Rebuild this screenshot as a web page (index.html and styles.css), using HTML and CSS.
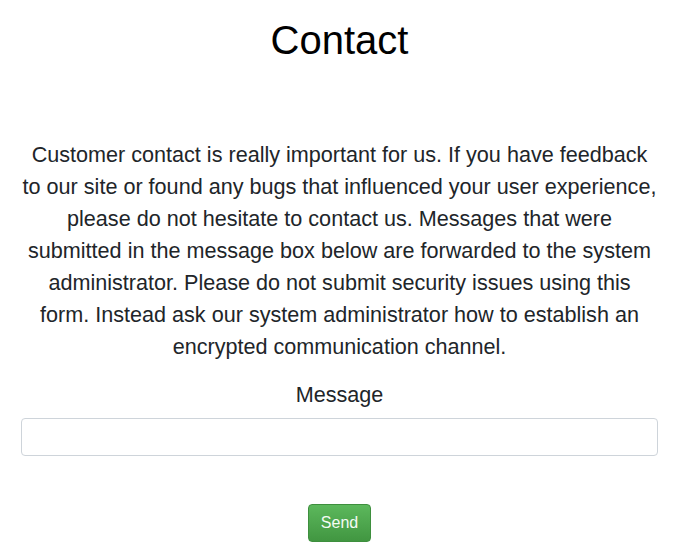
FILE: index.html
```html
<!DOCTYPE html>
<html lang="en">
<head>
<meta charset="utf-8">
<title>Contact</title>
<link rel="stylesheet" href="styles.css">
</head>
<body>
<main class="page">
  <h1 class="title">Contact</h1>
  <p class="intro">Customer contact is really important for us. If you have feedback to our site or found any bugs that influenced your user experience, please do not hesitate to contact us. Messages that were submitted in the message box below are forwarded to the system administrator. Please do not submit security issues using this form. Instead ask our system administrator how to establish an encrypted communication channel.</p>
  <form class="contact-form">
    <label class="field-label" for="message">Message</label>
    <input class="field-input" id="message" type="text">
    <button class="btn-send" type="button">Send</button>
  </form>
</main>
</body>
</html>
```

FILE: styles.css
```css
html, body {
  margin: 0;
  padding: 0;
  background: #fff;
}
body {
  font-family: "Liberation Sans", Arial, sans-serif;
  color: #212529;
}
.page {
  padding: 0 18px 0 21px;
  text-align: center;
}
.title {
  margin: 18px 0 0;
  font-size: 40px;
  font-weight: 400;
  line-height: 44px;
  color: #000;
}
.intro {
  margin: 77px 0 0;
  font-size: 21.6px;
  line-height: 32px;
}
.contact-form {
  display: flex;
  flex-direction: column;
  align-items: center;
}
.field-label {
  margin-top: 16px;
  font-size: 21.6px;
  line-height: 32px;
}
.field-input {
  box-sizing: border-box;
  width: 100%;
  height: 38px;
  margin-top: 7px;
  padding: 6px 12px;
  font: 16px/1.5 "Liberation Sans", Arial, sans-serif;
  border: 1px solid #ced4da;
  border-radius: 4px;
  background: #fff;
}
.btn-send {
  margin-top: 48px;
  height: 38px;
  padding: 6px 12px;
  font: 16px/1.5 "Liberation Sans", Arial, sans-serif;
  color: #f4fbf4;
  background: linear-gradient(#5cb85c, #419641);
  border: 1px solid #3e8f3e;
  border-radius: 4px;
}
```
